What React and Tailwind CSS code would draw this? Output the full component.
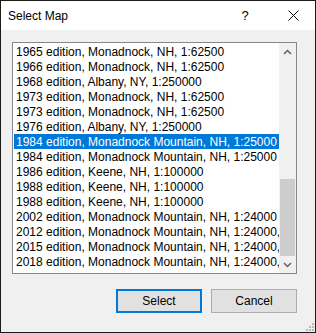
const maps = [
  '1965 edition, Monadnock, NH, 1:62500',
  '1966 edition, Monadnock, NH, 1:62500',
  '1968 edition, Albany, NY, 1:250000',
  '1973 edition, Monadnock, NH, 1:62500',
  '1973 edition, Monadnock, NH, 1:62500',
  '1976 edition, Albany, NY, 1:250000',
  '1984 edition, Monadnock Mountain, NH, 1:25000',
  '1984 edition, Monadnock Mountain, NH, 1:25000',
  '1986 edition, Keene, NH, 1:100000',
  '1988 edition, Keene, NH, 1:100000',
  '1988 edition, Keene, NH, 1:100000',
  '2002 edition, Monadnock Mountain, NH, 1:24000',
  '2012 edition, Monadnock Mountain, NH, 1:24000, ',
  '2015 edition, Monadnock Mountain, NH, 1:24000, ',
  '2018 edition, Monadnock Mountain, NH, 1:24000, ',
]

const Chevron = ({ up }) => (
  <svg width="9" height="6" viewBox="0 0 9 6" fill="none" stroke="#606060" strokeWidth="1.5">
    {up ? <path d="M1 5 L4.5 1.5 L8 5" /> : <path d="M1 1 L4.5 4.5 L8 1" />}
  </svg>
)

export default function App() {
  const selected = 6

  return (
    <div
      className="w-[316px] h-[333px] border border-[#1a1a1a] flex flex-col bg-[#f0f0f0] text-[12px] text-black overflow-hidden"
      style={{ fontFamily: '"Liberation Sans", Arial, sans-serif' }}
    >
      {/* Title bar */}
      <div className="h-[29px] bg-white flex items-center shrink-0">
        <span className="pl-[7px] flex-1 text-[12px]">Select Map</span>
        <span className="w-[16px] text-center text-[13px] mr-[35px]">?</span>
        <svg width="11" height="11" viewBox="0 0 11 11" stroke="#000" strokeWidth="1" className="mr-[16px]">
          <path d="M0.5 0.5 L10.5 10.5 M10.5 0.5 L0.5 10.5" />
        </svg>
      </div>

      {/* Body */}
      <div className="flex-1 flex flex-col pt-[12px] pl-[11px] pr-[18px]">
        <div className="w-[285px] h-[232px] border border-[#828790] bg-white flex">
          <div className="flex-1 pt-[1px] overflow-hidden">
            {maps.map((m, i) => (
              <div
                key={i}
                className={`h-[15px] leading-[14px] pt-[1px] ml-[1px] pl-[2px] whitespace-nowrap ${
                  i === selected ? 'bg-[#0078d7] text-white' : 'text-black'
                }`}
              >
                {m}
              </div>
            ))}
          </div>
          {/* Scrollbar */}
          <div className="w-[17px] flex flex-col bg-[#f0f0f0]">
            <div className="h-[17px] flex items-center justify-center">
              <Chevron up />
            </div>
            <div className="h-[119px]" />
            <div className="h-[77px] mx-[1px] bg-[#cdcdcd]" />
            <div className="h-[17px] flex items-center justify-center">
              <Chevron />
            </div>
          </div>
        </div>

        {/* Buttons */}
        <div className="flex justify-end gap-[9px] mt-[15px]">
          <button className="w-[86px] h-[24px] border-2 border-[#0078d7] bg-[#e1e1e1] text-[12px]">
            Select
          </button>
          <button className="w-[86px] h-[24px] border border-[#adadad] bg-[#e1e1e1] text-[12px]">
            Cancel
          </button>
        </div>

        <div className="flex-1 flex justify-end items-end -mr-[17px] pb-[1px]">
          <svg width="9" height="9" viewBox="0 0 9 9" fill="#b8b8b8">
            <rect x="7" y="1" width="2" height="2" />
            <rect x="4" y="4" width="2" height="2" />
            <rect x="7" y="4" width="2" height="2" />
            <rect x="1" y="7" width="2" height="2" />
            <rect x="4" y="7" width="2" height="2" />
            <rect x="7" y="7" width="2" height="2" />
          </svg>
        </div>
      </div>
    </div>
  )
}
